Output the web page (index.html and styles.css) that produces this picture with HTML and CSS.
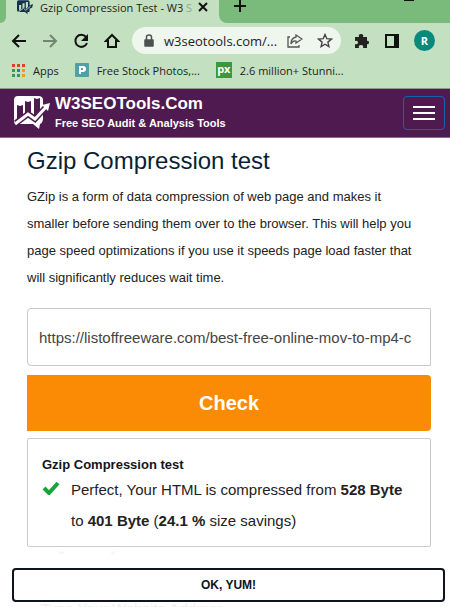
FILE: index.html
```
<!DOCTYPE html>
<html lang="en">
<head>
  <meta charset="UTF-8">
  <meta name="viewport" content="width=device-width, initial-scale=1.0">
  <title>Gzip Compression Test - W3 SEO Tools</title>
  <link rel="stylesheet" href="styles.css">
</head>
<body>
  <div class="browser">
    <div class="tabs">
      <div class="tab-edge"></div>
      <div class="tab">
        <svg class="favicon" width="16" height="16" viewBox="0 0 38 34">
          <path fill="#14304f" d="M4 1h22q4 0 4 4v8l8-3-2 8-6 3v6q0 2-4 2h-1v5l-6-5H5q-5 0-5-4V5q0-4 4-4z"/>
          <path fill="#c3e0c0" d="M5 12h5v10l-5 4zM13 8h5v10l-5 2zM21 5h5v12l-5 5z"/>
          <path fill="none" stroke="#c3e0c0" stroke-width="2" d="M3 29l12-9 6 5 12-11"/>
        </svg>
        <span class="tab-title">Gzip Compression Test - W3 <span class="fade">S</span></span>
        <button class="icon-btn" aria-label="Close tab">
          <svg width="10" height="10" viewBox="0 0 10 10"><path d="M1 1l8 8M9 1L1 9" stroke="#111" stroke-width="2"/></svg>
        </button>
      </div>
      <div class="tab-rest">
        <button class="icon-btn" aria-label="New tab">
          <svg width="12" height="12" viewBox="0 0 12 12"><path d="M6 0v12M0 6h12" stroke="#111" stroke-width="2"/></svg>
        </button>
        <span class="minimize"></span>
      </div>
    </div>

    <div class="toolbar">
      <button class="icon-btn" aria-label="Back">
        <svg width="16" height="16" viewBox="0 0 16 16"><path d="M15 8H2M8 2L2 8l6 6" fill="none" stroke="#111" stroke-width="2"/></svg>
      </button>
      <button class="icon-btn" aria-label="Forward">
        <svg width="16" height="16" viewBox="0 0 16 16"><path d="M1 8h13M8 2l6 6-6 6" fill="none" stroke="#758573" stroke-width="2"/></svg>
      </button>
      <button class="icon-btn" aria-label="Reload">
        <svg width="16" height="16" viewBox="0 0 16 16"><path d="M13 4a6 6 0 1 0 1 6" fill="none" stroke="#111" stroke-width="2"/><path d="M15 1v7H8z" fill="#111"/></svg>
      </button>
      <button class="icon-btn" aria-label="Home">
        <svg width="16" height="16" viewBox="0 0 16 16"><path d="M8 2l6 6h-2v6H4V8H2z" fill="none" stroke="#111" stroke-width="2"/></svg>
      </button>
      <div class="address">
        <svg width="10" height="13" viewBox="0 0 10 13"><path d="M1 6h8v6H1z" fill="#4c514d" stroke="#4c514d" stroke-width="1.500" stroke-linejoin="round"/><path d="M2.500 6V3a2.500 2 0 0 1 5 0v3" fill="none" stroke="#4c514d" stroke-width="1.500"/></svg>
        <span class="url">w3seotools.com/...</span>
        <svg width="16" height="14" viewBox="0 0 16 14"><path d="M3 3H1v10h11v-2" fill="none" stroke="#555" stroke-width="1.300"/><path d="M9 1l6 4-6 4V7Q6 6 4 10q0-6 5-7z" fill="none" stroke="#555" stroke-width="1.300"/></svg>
        <svg class="star" width="16" height="15" viewBox="0 0 16 15"><path d="M8 1.500l1.800 4.200 4.600.4-3.500 3 1 4.500L8 11.200l-3.900 2.400 1-4.500-3.500-3 4.600-.4z" fill="none" stroke="#444" stroke-width="1.400"/></svg>
      </div>
      <button class="icon-btn" aria-label="Extensions">
        <svg width="16" height="16" viewBox="0 0 16 16"><path fill="#222" d="M1 4h4q-1-3 2-3t2 3h4v4q2-1 2 1.500T13 11v4H9q1-3-2-3t-2 3H1v-4q3 1 3-1.500T1 8z"/></svg>
      </button>
      <button class="icon-btn" aria-label="Side panel">
        <svg width="14" height="14" viewBox="0 0 14 14"><path d="M1 1h12v12H1z" fill="none" stroke="#111" stroke-width="2"/><path d="M9 1h4v12H9z" fill="#111"/></svg>
      </button>
      <button class="avatar">R</button>
    </div>

    <div class="bookmarks">
      <a href="#">
        <svg width="13" height="13" viewBox="0 0 13 13">
          <path fill="#e33e2b" d="M0 0h3v3H0zM5 0h3v3H5zM10 0h3v3h-3z"/>
          <path fill="#2f9e4c" d="M0 5h3v3H0zM0 10h3v3H0zM5 10h3v3H5z"/>
          <path fill="#2f6fdd" d="M5 5h3v3H5z"/>
          <path fill="#ee9a1c" d="M10 5h3v3h-3zM10 10h3v3h-3z"/>
        </svg>
        Apps
      </a>
      <a href="#">
        <svg width="14" height="14" viewBox="0 0 14 14"><rect width="14" height="14" rx="1" fill="#52a0a3"/><path d="M4 3h4q3 0 3 3T8 9H6v2H4z" fill="#fff"/><path d="M6 5h2v2H6z" fill="#52a0a3"/></svg>
        Free Stock Photos,...
      </a>
      <a href="#"><span class="px">px</span>2.6 million+ Stunni...</a>
    </div>
  </div>

  <header class="navbar">
    <a href="#" class="brand">
      <svg width="38" height="36" viewBox="0 0 38 36">
        <path fill="#fff" d="M5 1h20q5 0 5 4v18q0 5-3 6l-1 5-6-5H5q-4 0-4-4V5q0-4 4-4z"/>
        <path fill="#4f1a50" d="M4 10l3 1 3-1v12l-6 5zM12 6l3 1 3-1v12l-3-1-3 2zM21 3l3 1 3-1v14l-6 6z"/>
        <path fill="none" stroke="#4f1a50" stroke-width="6" d="M3 28l12-9 7 5 11-12"/>
        <path fill="none" stroke="#fff" stroke-width="3" d="M2 29l13-10 7 5 12-13"/>
        <path fill="#fff" d="M29 10l8-2-2 8z"/>
      </svg>
      <span>
        <strong class="brand-name">W3SEOTools.Com</strong>
        <span class="tagline">Free SEO Audit &amp; Analysis Tools</span>
      </span>
    </a>
    <button class="menu" aria-label="Menu"><i></i><i></i><i></i></button>
  </header>

  <main class="content">
    <h1>Gzip Compression test</h1>
    <p class="intro">GZip is a form of data compression of web page and makes it smaller before sending them over to the browser. This will help you page speed optimizations if you use it speeds page load faster that will significantly reduces wait time.</p>
    <form>
      <input type="text" aria-label="Website address" value="https://listoffreeware.com/best-free-online-mov-to-mp4-c">
      <button type="button" class="check">Check</button>
    </form>
    <section class="result">
      <h2>Gzip Compression test</h2>
      <div class="result-row">
        <svg width="18" height="14" viewBox="0 0 18 14"><path d="M2 7l5 5L16 2" fill="none" stroke="#17a53a" stroke-width="4"/></svg>
        <p>Perfect, Your HTML is compressed from <b>528 Byte</b> to <b>401 Byte</b> (<b>24.1 %</b> size savings)</p>
      </div>
    </section>
  </main>

  <div class="cookie">
    <svg width="60" height="4" viewBox="0 0 60 4"><path d="M0 1q3 3 5 0M52 3q3 0 4-3" fill="none" stroke="#eee"/></svg>
    <button>OK, YUM!</button>
  </div>
  <div class="next-label">Type Your Website Address</div>
</body>
</html>
```
FILE: styles.css
```
*{
  box-sizing: border-box;
}
body{
  margin: 0;
  height: 100vh;
  overflow: hidden;
  background-color: #fff;
  font-family: "Liberation Sans", Arial, sans-serif;
  color: #222;
}
button{
  font-family: inherit;
  cursor: pointer;
}
svg{
  display: block;
  flex: none;
}
a{
  color: inherit;
  text-decoration: none;
}

/* browser bar */
.browser{
  background-color: #c3e0c0;
  font-family: "Open Sans", "Noto Sans", sans-serif;
  font-size: 11px;
  height: 88px;
  color: #222;
}
.icon-btn{
  border: none;
  background: none;
  padding: 0;
}
.tabs{
  display: flex;
  height: 23px;
}
.tab-edge{
  width: 6px;
  background-color: #7aba7a;
  border-radius: 0 0 8px 0;
}
.tab{
  display: flex;
  width: 213px;
  padding: 0 11px 9px 11px;
  align-items: center;
}
.tab-title{
  margin-left: 7px;
  flex: 1;
  white-space: nowrap;
}
.fade{
  color: #93aa91;
}
.tab-rest{
  flex: 1;
  display: flex;
  align-items: flex-start;
  justify-content: space-between;
  padding: 0 36px 0 15px;
  background-color: #7aba7a;
  border-radius: 0 0 0 8px;
}
.minimize{
  width: 10px;
  height: 1px;
  background-color: #111;
}
.toolbar{
  display: flex;
  align-items: center;
  height: 35px;
  padding: 0 15px 0 11px;
  gap: 15px;
}
.address{
  flex: 1;
  display: flex;
  align-items: center;
  height: 27px;
  border-radius: 14px;
  background-color: #eff6ee;
  padding: 0 8px 0 12px;
  margin: 0 -2px 0 -3px;
}
.url{
  flex: 1;
  margin-left: 10px;
  font-size: 13px;
}
.star{
  margin-left: 14px;
}
.avatar{
  width: 21px;
  height: 21px;
  border: none;
  border-radius: 50%;
  padding: 0;
  background-color: #07897b;
  color: #fff;
  font-size: 11px;
  font-weight: bold;
}
.bookmarks{
  display: flex;
  gap: 16px;
  padding: 4px 12px;
  white-space: nowrap;
}
.bookmarks a{
  display: flex;
  align-items: center;
  gap: 8px;
}
.px{
  width: 16px;
  height: 16px;
  line-height: 13px;
  background-color: #379b3e;
  color: #fff;
  font-weight: bold;
  text-align: center;
}

/* site header */
.navbar{
  display: flex;
  align-items: center;
  justify-content: space-between;
  height: 50px;
  padding: 0 5px 0 13px;
  background-color: #4f1a50;
  border-top: 1px solid #8c9c8b;
  border-bottom: 1px solid #8e6790;
}
.brand{
  display: flex;
  align-items: center;
  gap: 4px;
  color: #fff;
}
.brand-name{
  display: block;
  font-size: 17px;
  line-height: 20px;
}
.tagline{
  display: block;
  font-weight: bold;
  font-size: 11px;
  line-height: 18px;
}
.menu{
  display: flex;
  flex-direction: column;
  align-items: center;
  justify-content: center;
  gap: 4px;
  width: 42px;
  height: 34px;
  border: 1px solid #1763a8;
  border-radius: 4px;
  background: none;
  padding: 0;
}
.menu i{
  width: 22px;
  height: 2px;
  background-color: #fff;
}

/* page */
.content{
  padding: 8px 19px 0 27px;
}
h1{
  margin: 0;
  font-size: 24px;
  line-height: 30px;
  font-weight: normal;
  color: #0b1f33;
}
.intro{
  margin: 7px 0 17px;
  padding-right: 8px;
  font-size: 13px;
  line-height: 27px;
}
form input{
  display: block;
  width: 100%;
  height: 58px;
  padding: 0 11px;
  border: 1px solid #c9c9d1;
  border-radius: 4px 0 0 4px;
  font-family: inherit;
  font-size: 15px;
  color: #444;
}
.check{
  display: block;
  width: 100%;
  height: 56px;
  margin-top: 9px;
  border: none;
  border-radius: 0 4px 4px 0;
  background-color: #fb8a04;
  color: #fff;
  font-size: 20px;
  font-weight: bold;
}
.result{
  margin-top: 7px;
  padding: 17px 14px 10px;
  border: 1px solid #ccc;
  border-radius: 2px;
}
h2{
  margin: 0;
  font-size: 13px;
  line-height: 18px;
  color: #101522;
}
.result-row{
  display: flex;
  gap: 11px;
}
.result-row svg{
  margin-top: 7px;
}
.result-row p{
  margin: 0;
  font-size: 15px;
  line-height: 31px;
}

/* cookie notice */
.cookie{
  padding: 4px 5px 0 12px;
}
.cookie svg{
  margin-left: 47px;
}
.cookie button{
  display: block;
  width: 100%;
  height: 34px;
  margin-top: 13px;
  border: 2px solid #0d141c;
  border-radius: 4px;
  background-color: #fff;
  color: #0d141c;
  font-size: 12px;
  font-weight: bold;
}
.next-label{
  padding-left: 41px;
  font-size: 15px;
  line-height: 14px;
  color: #eee;
}
```
